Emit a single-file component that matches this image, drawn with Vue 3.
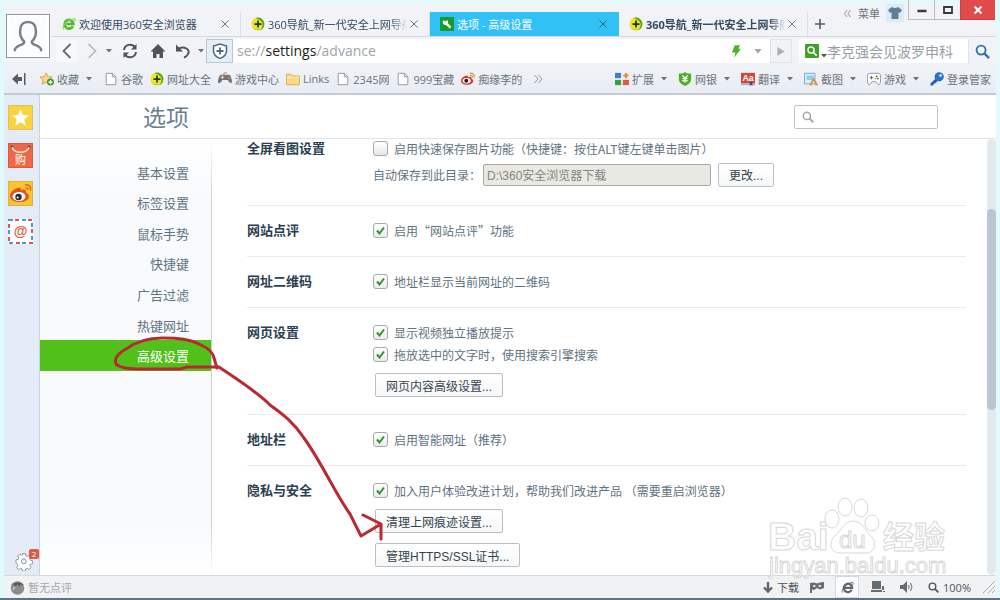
<script setup>
import { ref } from 'vue'

const tabs = [
  { title: '欢迎使用360安全浏览器', icon: 'browser' },
  { title: '360导航_新一代安全上网导航', icon: 'plus-ball', cut: true },
  { title: '选项 - 高级设置', icon: 'wrench', active: true },
  { title: '360导航_新一代安全上网导航', icon: 'plus-ball', cut: true, unread: true },
]

const bookmarks = [
  { title: '收藏', icon: 'fav', menu: true },
  { title: '谷歌', icon: 'file' },
  { title: '网址大全', icon: 'plus-ball' },
  { title: '游戏中心', icon: 'pad' },
  { title: 'Links', icon: 'folder' },
  { title: '2345网', icon: 'file' },
  { title: '999宝藏', icon: 'file' },
  { title: '痴缘李的', icon: 'weibo' },
]

const tools = [
  { title: '扩展', icon: 'ext', menu: true },
  { title: '网银', icon: 'bank', menu: true },
  { title: '翻译', icon: 'translate', menu: true },
  { title: '截图', icon: 'shot', menu: true },
  { title: '游戏', icon: 'game', menu: true },
  { title: '登录管家', icon: 'key' },
]

const menu = ['基本设置', '标签设置', '鼠标手势', '快捷键', '广告过滤', '热键网址', '高级设置']
const current = ref('高级设置')

const sections = ref([
  {
    title: '全屏看图设置',
    checks: [{ label: '启用快速保存图片功能（快捷键：按住ALT键左键单击图片）', on: false }],
    path: 'D:\\360安全浏览器下载',
  },
  { title: '网站点评', checks: [{ label: '启用“网站点评”功能', on: true }] },
  { title: '网址二维码', checks: [{ label: '地址栏显示当前网址的二维码', on: true }] },
  {
    title: '网页设置',
    checks: [
      { label: '显示视频独立播放提示', on: true },
      { label: '拖放选中的文字时，使用搜索引擎搜索', on: true },
    ],
    buttons: ['网页内容高级设置...'],
  },
  { title: '地址栏', checks: [{ label: '启用智能网址（推荐）', on: true }] },
  {
    title: '隐私与安全',
    checks: [{ label: '加入用户体验改进计划，帮助我们改进产品 （需要重启浏览器）', on: true }],
    buttons: ['清理上网痕迹设置...', '管理HTTPS/SSL证书...'],
  },
])

const keyword = ref('')
const savePath = ref(sections.value[0].path)
</script>

<template>
  <!-- icon sprite -->
  <svg class="sprite" aria-hidden="true">
    <symbol id="i-browser" viewBox="0 0 16 16">
      <path d="M12.5 10.5A5 5 0 1 1 13 8H5" fill="none" stroke="#4fbb2b" stroke-width="3" />
      <path d="M2 14C-1 11 6 3 14 2c2 0 1 2 0 3" fill="none" stroke="#8ed65e" stroke-width="1.4" />
    </symbol>
    <symbol id="i-plus-ball" viewBox="0 0 16 16">
      <circle cx="8" cy="8" r="7.5" fill="#f1e22c" />
      <path d="M5 1q7-2 10 5 1 6-4 9 4-6 1-10-3-3-7-4z" fill="#4da32a" />
      <path d="M1 11c3 4 8 4 11 2.5A7.5 7.5 0 0 1 1 11z" fill="#8fba28" />
      <path d="M8 4v8M4 8h8" stroke="#1c3c14" stroke-width="2" />
    </symbol>
    <symbol id="i-wrench" viewBox="0 0 16 16">
      <rect width="16" height="16" rx="1" fill="#189a2c" />
      <path d="M4 3.5l2 2 2-2C9.5 4.5 9.5 6 9 7l4 4-2 2-4-4C5 9.500 3 8 3 6z" fill="#fff" />
    </symbol>
    <symbol id="i-fav" viewBox="0 0 16 16">
      <path d="M7 1l2 4.300 5 .5-4 3.200 1 5-4-2.500-4.500 2.500 1-5L0 5.800l5-.5z" fill="#fbd78a" stroke="#d79a45" />
      <circle cx="12" cy="11.5" r="4" fill="#3d9a2c" />
      <path d="M12 9v5M9.5 11.5h5" stroke="#fff" stroke-width="1.5" />
    </symbol>
    <symbol id="i-file" viewBox="0 0 16 16">
      <path d="M2.5 1.5h7l4 4v9h-11zM9.5 1.5v4h4" fill="#fdfdfd" stroke="#8b9197" />
    </symbol>
    <symbol id="i-pad" viewBox="0 0 16 16">
      <path d="M3 3h10c2 1 3 6 3 9-2 2-4-2-5-3H5c-1 2-3 5-5 3 0-3 1-8 3-9z" fill="#77716f" />
      <path d="M5 4v4M3 6h4" stroke="#e8e8e8" />
      <circle cx="11" cy="5" r="1.2" fill="#d55" />
      <circle cx="13" cy="7" r="1.2" fill="#6b6" />
      <path d="M6 3q1-3 4-2" fill="none" stroke="#a66" />
    </symbol>
    <symbol id="i-folder" viewBox="0 0 16 16">
      <path d="M.5 2.5h5l1.5 2h8.5v10H.5z" fill="#fbd986" stroke="#d8a94d" />
      <path d="M1 6h14" stroke="#fff0c0" />
    </symbol>
    <symbol id="i-weibo" viewBox="0 0 16 16">
      <path d="M6 4C2 5 0 8 0 10c0 6 14 6 14 0 0-2-2-2-2-3 0-3-3-1-4-1 0-2-1-2-2-2z" fill="#d93a2b" />
      <ellipse cx="6.5" cy="10" rx="4.6" ry="3.2" fill="#fff" />
      <circle cx="6" cy="10" r="2.2" fill="#222" />
      <path d="M10 1.5c3-1 6 2 5 5M10.500 4c2-.5 3 1 2.500 2.500" fill="none" stroke="#e48c2c" stroke-width="1.3" />
    </symbol>
    <symbol id="i-ext" viewBox="0 0 16 16">
      <path d="M0 1h7v6H0z" fill="#3f7fd3" />
      <path d="M0 9h7v6H0z" fill="#3ba336" />
      <path d="M9 9h7v6H9z" fill="#e0584a" />
      <path d="M12.5 1v6M9.5 4h6" stroke="#e58a3c" stroke-width="2.2" />
    </symbol>
    <symbol id="i-bank" viewBox="0 0 16 16">
      <path d="M8 0l2 1.500 5 .5v6c0 4-3 6-7 8-4-2-7-4-7-8V2l5-.5z" fill="#4fae25" />
      <path d="M5 4l3 3 3-3M8 7v5M5 7.500h6M5 10h6" fill="none" stroke="#fff" stroke-width="1.5" />
    </symbol>
    <symbol id="i-translate" viewBox="0 0 16 16">
      <path d="M0 1h16v12H0z" fill="#d4463b" />
      <path d="M0 13h16v2H0z" fill="#a9adb5" />
      <path d="M10 11h3v5l-1.500-1.500L10 16z" fill="#2d4f95" />
      <text x="8" y="10" text-anchor="middle" font-size="10" font-weight="700" font-family="Liberation Sans, sans-serif" fill="#fff">Aa</text>
    </symbol>
    <symbol id="i-shot" viewBox="0 0 16 16">
      <path d="M.5 1.500h12v12H.5z" fill="#d9effb" stroke="#5ba7d5" />
      <path d="M3 4h8v5H3z" fill="#8fcbed" />
      <path d="M7 15l4-7 4 7" fill="none" stroke="#e08b25" stroke-width="1.8" />
      <circle cx="8" cy="14" r="1.7" fill="#e9a13c" />
      <circle cx="14" cy="14" r="1.7" fill="#e9a13c" />
    </symbol>
    <symbol id="i-game" viewBox="0 0 16 16">
      <path d="M3 1.500h10c2 0 2.500 2 2.500 5s0 8-2 8-2-3.500-4-3.500h-3c-2 0-2 3.500-4 3.500s-2-5-2-8 .5-5 2.500-5z" fill="#fff" stroke="#868c92" />
      <path d="M5 4.500v4M3 6.500h4" stroke="#555" />
      <circle cx="11" cy="5" r="1" fill="#555" />
      <circle cx="9.7" cy="7.5" r="1" fill="#e09a3c" />
      <circle cx="12.5" cy="7.5" r="1" fill="#555" />
    </symbol>
    <symbol id="i-key" viewBox="0 0 16 16">
      <path d="M8 6l-7.500 7v2.500h3l1-2 2-1 3-3" fill="#2060ac" />
      <circle cx="10.5" cy="5.5" r="5.3" fill="#2873c4" />
      <circle cx="12" cy="4" r="1.5" fill="#e8f2fc" />
    </symbol>
    <symbol id="i-glass" viewBox="0 0 16 16">
      <circle cx="6.5" cy="6.5" r="4.8" fill="none" stroke="currentColor" stroke-width="2" />
      <path d="M10 10l5 5" stroke="currentColor" stroke-width="2.6" />
    </symbol>
    <symbol id="i-caret" viewBox="0 0 6 4">
      <path d="M0 0h6L3 3.500z" fill="currentColor" />
    </symbol>
    <symbol id="i-close" viewBox="0 0 8 8">
      <path d="M.5.5l7 7M7.500.5l-7 7" stroke="currentColor" />
    </symbol>
  </svg>

  <div class="browser">
    <header class="chrome">
      <div class="top">
        <button class="avatar" aria-label="用户">
          <svg viewBox="0 0 40 40">
            <path d="M6 36c0-8 10-5 10-10-4-4-5-9-4-14 1-9 15-9 16 0 1 5 0 10-4 14 0 5 10 2 10 10" fill="none" stroke="#7a8188" stroke-width="2.6" />
          </svg>
        </button>
        <div class="bars">
          <div class="tabs">
            <div v-for="(tab, i) in tabs" :key="i" class="tab" :class="{ active: tab.active, unread: tab.unread }">
              <svg class="icon"><use :href="`#i-${tab.icon}`" /></svg>
              <span class="tab-title" :class="{ cut: tab.cut }">{{ tab.title }}</span>
              <button class="close" aria-label="关闭"><svg><use href="#i-close" /></svg></button>
            </div>
            <button class="new-tab" aria-label="新标签">
              <svg viewBox="0 0 10 10"><path d="M5 0v10M0 5h10" stroke="#555c63" stroke-width="1.6" /></svg>
            </button>
            <div class="win">
              <button class="menu-btn">
                <svg viewBox="0 0 8 8"><path d="M3.500 0L.5 4l3 4M7.500 0l-3 4 3 4" fill="none" stroke="#83898f" /></svg>菜单
              </button>
              <button class="skin" aria-label="皮肤">
                <svg viewBox="0 0 14 12"><path d="M4 0q3 2 6 0l4 3-2 3-1.500-1v7h-7V5L2 6 0 3z" fill="#5f8094" /></svg>
              </button>
              <button class="ctl" aria-label="最小化"><svg viewBox="0 0 10 10"><path d="M.5 6h9" stroke="#33393f" stroke-width="2.5" /></svg></button>
              <button class="ctl" aria-label="最大化"><svg viewBox="0 0 10 10"><path d="M1 2h8v6H1z" fill="none" stroke="#33393f" stroke-width="1.8" /></svg></button>
              <button class="ctl quit" aria-label="退出"><svg viewBox="0 0 10 10"><path d="M1.500 1.500l7 7M8.500 1.500l-7 7" stroke="#fff" stroke-width="2" /></svg></button>
            </div>
          </div>

          <div class="address">
            <nav class="nav">
              <button class="back" aria-label="后退"><svg viewBox="0 0 16 16"><path d="M11.500 1L4.500 8l7 7" fill="none" stroke="#63696f" stroke-width="1.8" /></svg></button>
              <button class="go" aria-label="前进"><svg viewBox="0 0 16 16"><path d="M4.500 1l7 7-7 7" fill="none" stroke="#b4b9be" stroke-width="1.6" /></svg></button>
              <svg class="caret"><use href="#i-caret" /></svg>
              <button class="reload" aria-label="刷新">
                <svg viewBox="0 0 16 16">
                  <path d="M2 7a6 6 0 0 1 11-2.500M14 9A6 6 0 0 1 3 11.500" fill="none" stroke="#4d545a" stroke-width="2" />
                  <path d="M14.500 1v5.500H9zM1.500 15V9.500H7z" fill="#4d545a" />
                </svg>
              </button>
              <button class="home" aria-label="主页"><svg viewBox="0 0 16 16"><path d="M8 1l7.500 7.500H13V15H9.500v-4h-3v4H3V8.500H.5z" fill="#4d545a" /></svg></button>
              <button class="undo" aria-label="恢复">
                <svg viewBox="0 0 16 16"><path d="M3 6c6-4 13 1 10 5q-1 2.500-4 3.500" fill="none" stroke="#4d545a" stroke-width="2" /><path d="M1 1.500v7h7z" fill="#4d545a" /></svg>
              </button>
              <svg class="caret"><use href="#i-caret" /></svg>
            </nav>
            <button class="shield" aria-label="安全">
              <svg viewBox="0 0 16 16"><path d="M8 1l6.500 2v5c0 4-3 6-6.500 7.500C4.500 14 1.500 12 1.500 8V3z" fill="#fff" stroke="#51677c" stroke-width="1.5" /><path d="M8 4.500v7M4.500 8h7" stroke="#51677c" stroke-width="1.8" /></svg>
            </button>
            <div class="url">
              <div class="url-text" role="textbox" aria-label="地址" contenteditable="true" spellcheck="false">se://<b>settings</b>/advance</div>
              <svg class="bolt" viewBox="0 0 10 14"><path d="M3 0h6L7 4h3L2 14l2-6H0z" fill="#48b52b" /></svg>
              <svg class="drop"><use href="#i-caret" /></svg>
            </div>
            <button class="play" aria-label="转到"><svg viewBox="0 0 8 10"><path d="M0 0l8 5-8 5z" fill="#a9afb5" /></svg></button>
            <div class="search">
              <svg class="engine" viewBox="0 0 15 15"><rect width="15" height="15" rx="1" fill="#3fa127" /><circle cx="6.5" cy="6.5" r="3.3" fill="none" stroke="#fff" stroke-width="1.5" /><path d="M9 9l3.500 3.500" stroke="#fff" stroke-width="1.8" /></svg>
              <svg class="caret dark"><use href="#i-caret" /></svg>
              <input type="text" aria-label="搜索" placeholder="李克强会见波罗申科">
            </div>
            <button class="search-go" aria-label="搜索"><svg><use href="#i-glass" /></svg></button>
          </div>
        </div>
      </div>

      <div class="marks">
        <svg class="pin" viewBox="0 0 14 12"><path d="M0 6l6-5.500V4h4v4H6v3.500zM12 0h1.500v12H12z" fill="#565d63" /></svg>
        <div class="mark-list">
          <a v-for="mark in bookmarks" :key="mark.title" href="#" class="mark">
            <svg class="icon"><use :href="`#i-${mark.icon}`" /></svg>{{ mark.title }}
            <svg v-if="mark.menu" class="caret"><use href="#i-caret" /></svg>
          </a>
          <svg class="more" viewBox="0 0 8 8"><path d="M.5 0l3.500 4L.5 8M4.500 0L8 4 4.500 8" fill="none" stroke="#92989e" /></svg>
        </div>
        <div class="tool-list">
          <a v-for="tool in tools" :key="tool.title" href="#" class="mark">
            <svg class="icon"><use :href="`#i-${tool.icon}`" /></svg>{{ tool.title }}
            <svg v-if="tool.menu" class="caret"><use href="#i-caret" /></svg>
          </a>
        </div>
      </div>
    </header>

    <div class="body">
      <aside class="dock">
        <button aria-label="收藏夹">
          <svg viewBox="0 0 25 25"><rect x=".5" y=".5" width="24" height="24" fill="#fad43c" stroke="#d9c06a" /><path d="M12.500 4l2.500 6 6 .5-4.700 4 1.500 6.200-5.300-3.400-5.300 3.400 1.500-6.200L4 10.500l6-.5z" fill="#fff" /></svg>
        </button>
        <button aria-label="购物">
          <svg viewBox="0 0 25 25">
            <rect x=".5" y=".5" width="24" height="24" fill="#ef6747" stroke="#cf5d44" />
            <circle cx="4" cy="4" r="1.5" fill="#7c2b1c" /><circle cx="21" cy="4" r="1.5" fill="#7c2b1c" />
            <path d="M4 4c2 7 15 7 17 0" fill="none" stroke="#fbe3da" stroke-width="1.6" />
            <text x="12.5" y="21" text-anchor="middle" font-size="11" font-family="Noto Sans CJK SC, sans-serif" fill="#fff">购</text>
          </svg>
        </button>
        <button aria-label="微博">
          <svg viewBox="0 0 25 25">
            <rect x=".5" y=".5" width="24" height="24" fill="#fbc62c" stroke="#d9b04a" />
            <path d="M10 7c-5 1-8 5-8 8 0 8 19 8 19 0 0-3-3-2-3-4 0-4-4-2-5-2 0-3-2-2-3-2z" fill="#e3502b" />
            <ellipse cx="11" cy="15.5" rx="6.5" ry="4.5" fill="#fff" />
            <circle cx="10.5" cy="16" r="3.2" fill="#2b2b2b" /><circle cx="9.7" cy="16.5" r="1" fill="#fff" />
            <path d="M17 4c4-1 6 2 5.500 5.500M17.500 7q2.500-.5 2.300 2" fill="none" stroke="#e3602b" stroke-width="1.5" />
          </svg>
        </button>
        <button aria-label="邮箱">
          <svg viewBox="0 0 25 25">
            <rect width="25" height="25" fill="#fff" />
            <rect x="1" y="1" width="23" height="23" fill="none" stroke="#4a9fc4" stroke-width="2" stroke-dasharray="4 9" />
            <rect x="1" y="1" width="23" height="23" fill="none" stroke="#d9584b" stroke-width="2" stroke-dasharray="4 9" stroke-dashoffset="-6" />
            <text x="12.5" y="17" text-anchor="middle" font-size="14" font-weight="700" font-family="Liberation Sans, sans-serif" fill="#de5a41">@</text>
          </svg>
        </button>
        <button class="gear" aria-label="设置">
          <svg viewBox="0 0 18 18">
            <path d="M7.500 1h3l.4 2.200 1.600.7 1.900-1.300 2 2-1.300 1.900.7 1.600 2.200.4v3l-2.200.4-.7 1.600 1.300 1.900-2 2-1.900-1.300-1.600.7-.4 2.200h-3l-.4-2.200-1.600-.7-1.900 1.300-2-2 1.300-1.900-.7-1.600L1 10.500v-3l2.200-.4.700-1.600-1.300-1.900 2-2 1.900 1.300 1.600-.7z" fill="#fff" stroke="#8d949b" transform="translate(0 -.5) scale(.98)" />
            <circle cx="8.8" cy="8.3" r="2.5" fill="#f2f4f7" stroke="#8d949b" />
          </svg>
          <span class="badge">2</span>
        </button>
      </aside>

      <div class="page">
        <div class="page-head">
          <h1>选项</h1>
          <label class="find">
            <svg><use href="#i-glass" /></svg>
            <input v-model="keyword" type="text" aria-label="搜索选项">
          </label>
        </div>
        <div class="page-body">
          <ul class="side">
            <li v-for="item in menu" :key="item">
              <a href="#" :class="{ selected: item === current }" @click.prevent="current = item">{{ item }}</a>
            </li>
          </ul>
          <main class="content">
            <section v-for="(sec, s) in sections" :key="sec.title" class="group">
              <h2>{{ sec.title }}</h2>
              <div class="rows">
                <label v-for="(c, i) in sec.checks" :key="i" class="check">
                  <input v-model="c.on" type="checkbox">{{ c.label }}
                </label>
                <div v-if="sec.path" class="save">
                  <label :for="`path${s}`">自动保存到此目录：</label>
                  <input :id="`path${s}`" v-model="savePath" type="text" disabled>
                  <button class="btn">更改...</button>
                </div>
                <div v-if="sec.buttons" class="btns">
                  <button v-for="b in sec.buttons" :key="b" class="btn">{{ b }}</button>
                </div>
              </div>
            </section>
          </main>
          <div class="scroll"><div class="thumb"></div></div>
        </div>
      </div>
    </div>

    <footer class="status">
      <svg class="tomato" viewBox="0 0 14 14"><circle cx="7" cy="7.5" r="6.3" fill="#8c8c8c" /><path d="M1 5c3-3 9-4 12 0l-4-1 1 3-3-3-3 3 .5-3z" fill="#555" /><path d="M3 9q0-2 2-2.500" fill="none" stroke="#ddd" /></svg>
      <span class="review">暂无点评</span>
      <button class="st-btn">
        <svg class="down" viewBox="0 0 10 11"><path d="M5 0v8M1 5.500l4 4 4-4" fill="none" stroke="#5f666c" stroke-width="2.4" /></svg>下载
      </button>
      <button class="st-btn" aria-label="无痕">
        <svg class="mask" viewBox="0 0 14 11"><path d="M0 1l4-.5 3 1 3-1 4-.5v6l-4 1.500L7 6 4 8l-2-.5V11H0z" fill="#656c72" /><path d="M3 4h2.500M8.500 4H11" stroke="#fff" stroke-width="1.5" /></svg>
      </button>
      <button class="st-btn ie" aria-label="内核">
        <svg viewBox="0 0 14 14"><path d="M11.500 9.500a4.500 4.500 0 1 1 .5-2H4" fill="none" stroke="#5f666c" stroke-width="2.4" /><path d="M2 12.500C-1 10 6 3 12 1.500c2 0 1 2 0 3" fill="none" stroke="#5f666c" /></svg>
      </button>
      <button class="st-btn" aria-label="窗口"><svg class="lap" viewBox="0 0 14 12"><path d="M1 0h9v8H1zM0 9h11v2H0zM11 5h2v4h-2zM12 10h2v1h-2z" fill="#656c72" /></svg></button>
      <button class="st-btn" aria-label="声音"><svg class="vol" viewBox="0 0 13 12"><path d="M0 4h3l4-4v12L3 8H0z" fill="#656c72" /><path d="M8.500 4q1.500 2 0 4M10.500 2q3 4 0 8" fill="none" stroke="#656c72" /></svg></button>
      <button class="st-btn"><svg class="zoom"><use href="#i-glass" /></svg>100%</button>
      <svg class="grip" viewBox="0 0 14 14"><path d="M1 13L13 1M6 13l7-7M10 13l3-3" stroke="#a8adb2" /></svg>
    </footer>

    <!-- hand-drawn mark and arrow -->
    <svg class="ink" viewBox="0 0 1000 600" aria-hidden="true">
      <path d="M117 365C113 360 117 354 126 349C137 341 148 338 162 338C178 338 190 339 201 345C210 349 213 353 214 358L217 368" />
      <path d="M117 365C122 368 129 369 138 369H180L187 367H219C235 378 256 391 270 405C284 415 294 423 304 438C322 463 336 495 350 514L361 536L381 524L363 515L381 524V539" />
    </svg>
    <svg class="water" viewBox="0 0 190 90" aria-hidden="true">
      <text x="3" y="59" font-size="39" font-weight="700">Bai</text>
      <ellipse cx="67" cy="28" rx="7" ry="9" />
      <ellipse cx="80" cy="16" rx="7" ry="9" />
      <ellipse cx="96" cy="17" rx="7" ry="9" />
      <ellipse cx="107" cy="32" rx="7" ry="8" />
      <path d="M88 30c10 0 12 10 18 15s5 17-5 17H75c-10 0-12-11-5-17s9-15 18-15z" />
      <text x="74" y="57" font-size="24">du</text>
      <text x="118" y="57" font-size="31" font-weight="700" class="cn">经验</text>
      <text x="4" y="82" font-size="22">jingyan.baidu.com</text>
    </svg>
  </div>
</template>

<style>
body {
  background: #dffbfe;
}
</style>

<style scoped>
* {
  box-sizing: border-box;
}

.sprite {
  position: absolute;
  width: 0;
  height: 0;
}

button {
  padding: 0;
  border: 0;
  background: none;
  font: inherit;
  color: inherit;
  display: flex;
  align-items: center;
  justify-content: center;
}

a {
  color: inherit;
  text-decoration: none;
}

.browser {
  position: relative;
  display: flex;
  flex-direction: column;
  height: 100vh;
  padding: 0 4px;
  border-bottom: 2px solid #5d7482;
  font-family: "Open Sans", "Noto Sans CJK SC", sans-serif;
  font-size: 11px;
  color: #6c747c;
  overflow: hidden;
}

/* chrome */
.chrome {
  flex: none;
  background: linear-gradient(#dffbfe 3px, #f1f3f6 3px, #f1f3f7 60px, #e9edf4);
  border-bottom: 2px solid #c3cad3;
}

.top {
  display: flex;
}

.avatar {
  width: 44px;
  height: 44px;
  margin: 14px 2px 0 2px;
  border: 1px solid #8f969d;
  background: #fbfcfd;
  box-shadow: inset 0 0 0 2px #fff;
}

.avatar svg {
  width: 38px;
  height: 38px;
}

.bars {
  flex: 1;
  min-width: 0;
}

.tabs {
  display: flex;
  align-items: flex-end;
  height: 37px;
  border-bottom: 1px solid #d5d9de;
}

.tab {
  flex: 0 1 189px;
  min-width: 0;
  height: 24px;
  display: flex;
  align-items: center;
  gap: 3px;
  padding: 0 11px 0 10px;
  border-right: 1px solid #dcdfe3;
  color: #364a60;
}

.tab.active {
  background: #31c1f4;
  color: #fff;
  border-color: #31c1f4;
}

.tab.unread {
  font-weight: 700;
}

.icon {
  flex: none;
  width: 14px;
  height: 14px;
}

.tab-title {
  flex: 1;
  overflow: hidden;
  white-space: nowrap;
}

.tab-title.cut {
  mask-image: linear-gradient(90deg, #000 88%, transparent);
}

.close svg {
  width: 8px;
  height: 8px;
  color: #70777d;
}

.active .close svg {
  color: #2b6584;
}

.new-tab {
  width: 24px;
  height: 24px;
}

.new-tab svg {
  width: 10px;
  height: 10px;
}

.win {
  display: flex;
  align-self: flex-start;
  margin-left: auto;
}

.menu-btn {
  height: 26px;
  margin-right: 6px;
  gap: 7px;
  white-space: nowrap;
}

.menu-btn svg {
  width: 7px;
  height: 7px;
}

.skin {
  width: 18px;
  height: 18px;
  margin: 4px 4px 0 0;
  background: #dcecf7;
}

.skin svg {
  width: 14px;
  height: 12px;
}

.ctl {
  width: 26px;
  height: 20px;
  border: 1px solid #b7bec5;
  border-top: 0;
  border-right: 0;
}

.ctl svg {
  width: 10px;
  height: 10px;
}

.quit {
  width: 35px;
  margin-right: 1px;
  background: #df4b4b;
  border-color: #c94040;
}

.address {
  display: flex;
  height: 26px;
  padding-top: 2px;
}

.nav {
  flex: none;
  display: flex;
  align-items: center;
  width: 154px;
  padding-left: 4px;
}

.nav button svg {
  width: 16px;
  height: 16px;
}

.back {
  width: 22px;
  height: 22px;
  background: #f7f8fa;
}

.go {
  width: 28px;
}

.reload {
  width: 36px;
}

.home {
  width: 20px;
}

.undo {
  width: 30px;
}

.caret {
  flex: none;
  width: 6px;
  height: 4px;
  color: #6c7278;
}

.shield {
  width: 27px;
  background: #e6eef8;
  border: 1px solid #b8c6d8;
}

.shield svg {
  width: 16px;
  height: 16px;
}

.url {
  flex: 1;
  display: flex;
  align-items: center;
  padding: 0 8px 0 4px;
  background: #fff;
}

.url-text {
  flex: 1;
  font-size: 14px;
  line-height: 20px;
  color: #a0a4a8;
  white-space: nowrap;
}

.url-text b {
  font-weight: 400;
  color: #1c1f22;
}

.bolt {
  width: 9px;
  height: 13px;
  margin-right: 13px;
}

.drop {
  width: 8px;
  height: 5px;
  color: #a3a8ad;
}

.play {
  width: 22px;
  margin-right: 7px;
  border: 1px solid #e1e4e8;
}

.play svg {
  width: 8px;
  height: 9px;
}

.search {
  width: 169px;
  display: flex;
  align-items: center;
  padding-left: 6px;
  background: #fff;
}

.engine {
  flex: none;
  width: 14px;
  height: 14px;
  margin-right: 2px;
}

.caret.dark {
  align-self: flex-end;
  margin-bottom: 5px;
  color: #555;
}

.search input {
  flex: 1;
  min-width: 0;
  padding: 0;
  border: 0;
  outline: 0;
  background: none;
  font: 14px "Noto Sans CJK SC", sans-serif;
}

.search input::placeholder {
  color: #96a0a8;
}

.search-go {
  width: 28px;
  border-left: 1px solid #dfe3e8;
}

.search-go svg {
  width: 15px;
  height: 15px;
  color: #2f74b3;
}

/* bookmarks */
.marks {
  display: flex;
  align-items: center;
  height: 30px;
  padding: 1px 5px 0 8px;
}

.pin {
  width: 14px;
  height: 12px;
  margin-right: 14px;
}

.mark-list,
.tool-list {
  display: flex;
  align-items: center;
  gap: 7px;
  white-space: nowrap;
}

.tool-list {
  margin-left: auto;
  gap: 11px;
}

.mark {
  display: flex;
  align-items: center;
  gap: 3px;
}

.mark .caret {
  margin-left: 4px;
}

.mark-list .mark:first-child {
  margin-right: 5px;
}

.more {
  width: 8px;
  height: 8px;
  margin-left: 5px;
}

/* body */
.body {
  flex: 1;
  min-height: 0;
  display: flex;
}

.dock {
  flex: none;
  width: 36px;
  display: flex;
  flex-direction: column;
  align-items: flex-start;
  gap: 13px;
  padding: 10px 0 4px 4px;
  background: #e3ebf6;
  border-right: 1px solid #c9d2dd;
}

.dock svg {
  width: 25px;
  height: 25px;
}

.gear {
  position: relative;
  margin: auto 0 0 7px;
}

.gear svg {
  width: 18px;
  height: 18px;
}

.badge {
  position: absolute;
  top: -4px;
  right: -6px;
  width: 10px;
  border-radius: 2px;
  background: #dc5a47;
  color: #fff;
  font-size: 8px;
  line-height: 10px;
}

.page {
  flex: 1;
  min-width: 0;
  display: flex;
  flex-direction: column;
  background: #fff;
}

.page-head {
  flex: none;
  display: flex;
  align-items: center;
  justify-content: space-between;
  height: 44px;
  padding: 0 58px 0 103px;
  border-bottom: 1px solid #e2e5e8;
}

h1 {
  margin: 0;
  font-size: 23px;
  font-weight: 400;
  line-height: 40px;
  color: #6b7f8f;
}

.find {
  display: flex;
  align-items: center;
  width: 144px;
  height: 24px;
  padding: 0 7px;
  border: 1px solid #bfc3c7;
  border-radius: 2px;
}

.find svg {
  flex: none;
  width: 12px;
  height: 12px;
  color: #a3a8ad;
}

.find input {
  flex: 1;
  min-width: 0;
  border: 0;
  outline: 0;
  font: inherit;
}

.page-body {
  flex: 1;
  min-height: 0;
  display: flex;
}

.side {
  flex: none;
  display: grid;
  grid-auto-rows: 1fr;
  align-self: stretch;
  width: 172px;
  margin: 0;
  padding: 18px 0 204px;
  list-style: none;
  font-size: 13px;
  color: #5f7482;
  background: linear-gradient(#fff, #f8fafc 60px, #f8fafc calc(100% - 50px), #fff);
  border-right: 1px solid;
  border-image: linear-gradient(#fff, #ccd1d6 60px, #ccd1d6 calc(100% - 50px), #fff) 1;
}

.side a {
  display: flex;
  align-items: center;
  justify-content: flex-end;
  height: 100%;
  padding-right: 22px;
}

.side .selected {
  background: #52c01a;
  color: #fff;
}

/* the list is scrolled a little past its top */
.content {
  flex: 1;
  min-width: 0;
  margin: 0 21px 0 35px;
  overflow: hidden;
}

.group:first-child {
  margin-top: -15px;
}

.group {
  display: flex;
  padding: 13px 0 15px;
  border-bottom: 1px solid #e9ebed;
}

.group:last-child {
  border-bottom: 0;
}

h2 {
  flex: none;
  width: 126px;
  margin: 0;
  font-size: 13px;
  line-height: 22px;
  color: #2b3f50;
}

.rows {
  flex: 1;
  font-family: "Noto Sans CJK SC", sans-serif;
  font-size: 12px;
  color: #5f7280;
}

.check {
  display: flex;
  align-items: center;
  gap: 6px;
  height: 22px;
  white-space: nowrap;
}

.check input {
  appearance: none;
  flex: none;
  width: 15px;
  height: 15px;
  margin: 0;
  border: 1px solid #a5aaae;
  border-radius: 3px;
  background: linear-gradient(#fff, #e6e6e6);
}

.check input:checked {
  background: url("data:image/svg+xml,%3Csvg xmlns='http://www.w3.org/2000/svg' viewBox='0 0 13 13'%3E%3Cpath d='M3 6.5l2.5 3L10 3.5' fill='none' stroke='%232c9430' stroke-width='2'/%3E%3C/svg%3E"), linear-gradient(#fff, #ececec);
}

.save {
  display: flex;
  align-items: center;
  height: 31px;
}

.save input {
  width: 228px;
  height: 22px;
  margin: 0 7px 0 2px;
  padding: 0 3px;
  border: 1px solid #a9aaa5;
  border-radius: 2px;
  background: #e9e8e2;
  color: #85867f;
  font: 12px "Liberation Sans", "Noto Sans CJK SC", sans-serif;
}

.btns {
  display: flex;
  flex-direction: column;
  align-items: flex-start;
  gap: 10px;
  padding: 8px 0 2px 2px;
}

.btn {
  height: 24px;
  padding: 0 10px;
  border: 1px solid #bcc0c4;
  border-radius: 2px;
  background: linear-gradient(#fff, #f6f7f8);
  color: #34444f;
  font-family: "Liberation Sans", "Noto Sans CJK SC", sans-serif;
}

.scroll {
  width: 9px;
  padding-top: 70px;
  border-radius: 5px;
  background: #e4e9ee;
}

.thumb {
  height: 201px;
  border-radius: 5px;
  background: #bac7d3;
}

/* status bar */
.status {
  flex: none;
  display: flex;
  align-items: center;
  height: 23px;
  padding-left: 6px;
  background: #f0f2f4;
  border-top: 1px solid #d7dadd;
  color: #4e565d;
}

.tomato {
  width: 15px;
  height: 15px;
  margin-right: 3px;
}

.review {
  margin-right: auto;
  color: #a2a8ad;
}

.st-btn {
  gap: 4px;
  margin-right: 11px;
}

.down {
  width: 10px;
  height: 11px;
}

.mask {
  width: 14px;
  height: 11px;
}

.ie {
  width: 24px;
  height: 22px;
  margin-right: 12px;
  background: #fafbfc;
  border: 1px solid #d3dae0;
}

.ie svg {
  width: 13px;
  height: 13px;
}

.lap {
  width: 14px;
  height: 12px;
  margin-right: 4px;
}

.vol {
  width: 13px;
  height: 12px;
  margin-right: 4px;
}

.zoom {
  width: 11px;
  height: 11px;
}

.grip {
  width: 14px;
  height: 14px;
}

.ink {
  position: absolute;
  top: 0;
  left: 0;
  width: 1000px;
  height: 600px;
  pointer-events: none;
}

.ink path {
  fill: none;
  stroke: #b92a30;
  stroke-width: 3px;
  stroke-linecap: round;
  stroke-linejoin: round;
}

.water {
  position: absolute;
  right: 45px;
  bottom: 17px;
  width: 190px;
  height: 90px;
  pointer-events: none;
  fill: #fff;
  stroke: #d8d8d8;
  stroke-width: 1px;
  font-family: "Liberation Sans", sans-serif;
}

.water .cn {
  font-family: "Noto Sans CJK SC", sans-serif;
}
</style>
